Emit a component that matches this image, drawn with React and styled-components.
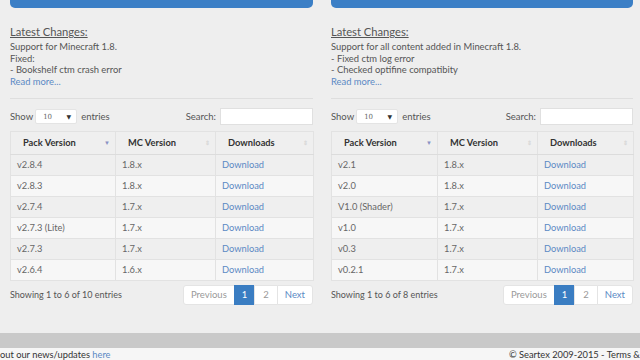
import React from "react"
import styled, { createGlobalStyle } from "styled-components"

const Global = createGlobalStyle`
  html, body {
    margin: 0;
    padding: 0;
    background: #eeeeee;
    font-family: Lato, "Open Sans", sans-serif;
    color: #555;
    overflow: hidden;
  }
`

const Page = styled.div`
  width: 640px;
  height: 360px;
  display: flex;
  flex-direction: column;
`

const Columns = styled.div`
  display: flex;
  gap: 18px;
  padding: 0 7px 0 10px;
  height: 333px;
`

const Column = styled.div`
  width: ${(p) => p.w}px;
  display: flex;
  flex-direction: column;
`

const TopBar = styled.div`
  height: 8px;
  background: #3b7fc6;
  border-radius: 0 0 5px 5px;
`

const Heading = styled.div`
  margin-top: 17px;
  font-size: 11.2px;
  text-decoration: underline;
  color: #555;
  line-height: 14px;
`

const Notes = styled.div`
  margin-top: 2px;
  font-size: 9.4px;
  line-height: 11.7px;
  color: #555;
`

const Link = styled.a`
  color: #5b89c4;
  text-decoration: none;
`

const Rule = styled.div`
  height: 1px;
  background: #dedede;
  margin-top: 10px;
`

const Controls = styled.div`
  margin-top: 9px;
  display: flex;
  align-items: center;
  justify-content: space-between;
  font-size: 9.5px;
  height: 18px;
`

const Group = styled.div`
  display: flex;
  align-items: center;
  gap: ${(p) => p.gap}px;
`

const Select = styled.div`
  width: 42px;
  height: 15px;
  background: #fff;
  border: 1px solid #e4e4e4;
  border-radius: 2px;
  display: flex;
  align-items: center;
  justify-content: space-between;
  padding: 0 5px 0 7px;
  box-sizing: border-box;
  font-family: "DejaVu Serif", serif;
  font-size: 7px;
  color: #666;
`

const Caret = styled.span`
  font-size: 6px;
  color: #333;
`

const Input = styled.div`
  width: 93px;
  height: 17px;
  background: #fff;
  border: 1px solid #e0e0e0;
  box-sizing: border-box;
`

const Table = styled.table`
  margin-top: 5px;
  width: 100%;
  border-collapse: collapse;
  font-size: 9.3px;
  table-layout: fixed;
`

const Th = styled.th`
  height: 22px;
  padding: 0 6px 0 12px;
  text-align: left;
  font-weight: 700;
  color: #333;
  background: #efefef;
  border: 1px solid #e2e2e2;
  border-bottom: 1px solid #dcdcdc;
  position: relative;
`

const SortMark = styled.span`
  position: absolute;
  right: 5px;
  top: 7px;
  font-size: 6px;
  color: ${(p) => (p.active ? "#8a92c4" : "#d8d8d8")};
`

const Row = styled.tr`
  background: ${(p) => (p.odd ? "#efefef" : "#f7f7f7")};
`

const Td = styled.td`
  height: 20px;
  padding: 0 6px;
  border: 1px solid #e2e2e2;
  color: #666;
  white-space: nowrap;
`

const Bottom = styled.div`
  margin-top: 4px;
  display: flex;
  align-items: center;
  justify-content: space-between;
  font-size: 9px;
  color: #555;
`

const Pager = styled.div`
  display: flex;
  height: 20px;
  font-size: 9.5px;
`

const PageBtn = styled.div`
  padding: 0 ${(p) => p.px}px;
  display: flex;
  align-items: center;
  background: ${(p) => (p.active ? "#3a7dc2" : "#ffffff")};
  color: ${(p) => (p.active ? "#fff" : p.muted ? "#999" : "#5b89c4")};
  border: 1px solid ${(p) => (p.active ? "#3a7dc2" : "#e4e4e4")};
  margin-left: -1px;
  border-radius: ${(p) => p.radius || "0"};
`

const Band = styled.div`
  height: 15px;
  background: #c9c9c9;
`

const Footer = styled.div`
  height: 12px;
  background: #f6f6f6;
  display: flex;
  justify-content: space-between;
  align-items: center;
  font-size: 9.3px;
  color: #333;
  overflow: hidden;
  white-space: nowrap;
`

const FooterRight = styled.span`
  flex-shrink: 0;
`

const Panel = ({ w, widths, notes, rows, total }) => (
  <Column w={w}>
    <TopBar />
    <Heading>Latest Changes:</Heading>
    <Notes>
      {notes.map((n) => (
        <div key={n}>{n}</div>
      ))}
      <Link>Read more...</Link>
    </Notes>
    <Rule />
    <Controls>
      <Group gap={2}>
        Show
        <Select>
          10 <Caret>▼</Caret>
        </Select>
        <span style={{ marginLeft: 2 }}>entries</span>
      </Group>
      <Group gap={4}>
        Search:
        <Input />
      </Group>
    </Controls>
    <Table>
      <colgroup>
        {widths.map((c, i) => (
          <col key={i} style={{ width: c }} />
        ))}
      </colgroup>
      <thead>
        <tr>
          <Th>
            Pack Version<SortMark active>▼</SortMark>
          </Th>
          <Th>
            MC Version<SortMark>⇕</SortMark>
          </Th>
          <Th>
            Downloads<SortMark>⇕</SortMark>
          </Th>
        </tr>
      </thead>
      <tbody>
        {rows.map((r, i) => (
          <Row key={r[0]} odd={i % 2 === 0}>
            <Td>{r[0]}</Td>
            <Td>{r[1]}</Td>
            <Td>
              <Link>Download</Link>
            </Td>
          </Row>
        ))}
      </tbody>
    </Table>
    <Bottom>
      <span>Showing 1 to 6 of {total} entries</span>
      <Pager>
        <PageBtn px={7} muted radius="3px 0 0 3px">
          Previous
        </PageBtn>
        <PageBtn px={7} active>
          1
        </PageBtn>
        <PageBtn px={8} muted>
          2
        </PageBtn>
        <PageBtn px={7} radius="0 3px 3px 0">
          Next
        </PageBtn>
      </Pager>
    </Bottom>
  </Column>
)

export default function App() {
  return (
    <Page>
      <Global />
      <Columns>
        <Panel
          w={303}
          widths={[105, 100, 98]}
          total={10}
          notes={["Support for Minecraft 1.8.", "Fixed:", "- Bookshelf ctm crash error"]}
          rows={[
            ["v2.8.4", "1.8.x"],
            ["v2.8.3", "1.8.x"],
            ["v2.7.4", "1.7.x"],
            ["v2.7.3 (Lite)", "1.7.x"],
            ["v2.7.3", "1.7.x"],
            ["v2.6.4", "1.6.x"],
          ]}
        />
        <Panel
          w={302}
          widths={[106, 100, 96]}
          total={8}
          notes={[
            "Support for all content added in Minecraft 1.8.",
            "- Fixed ctm log error",
            "- Checked optifine compatibity",
          ]}
          rows={[
            ["v2.1", "1.8.x"],
            ["v2.0", "1.8.x"],
            ["V1.0 (Shader)", "1.7.x"],
            ["v1.0", "1.7.x"],
            ["v0.3", "1.7.x"],
            ["v0.2.1", "1.7.x"],
          ]}
        />
      </Columns>
      <Band />
      <Footer>
        <span>
          out our news/updates <Link>here</Link>
        </span>
        <FooterRight>© Seartex 2009-2015 - Terms &amp;</FooterRight>
      </Footer>
    </Page>
  )
}
